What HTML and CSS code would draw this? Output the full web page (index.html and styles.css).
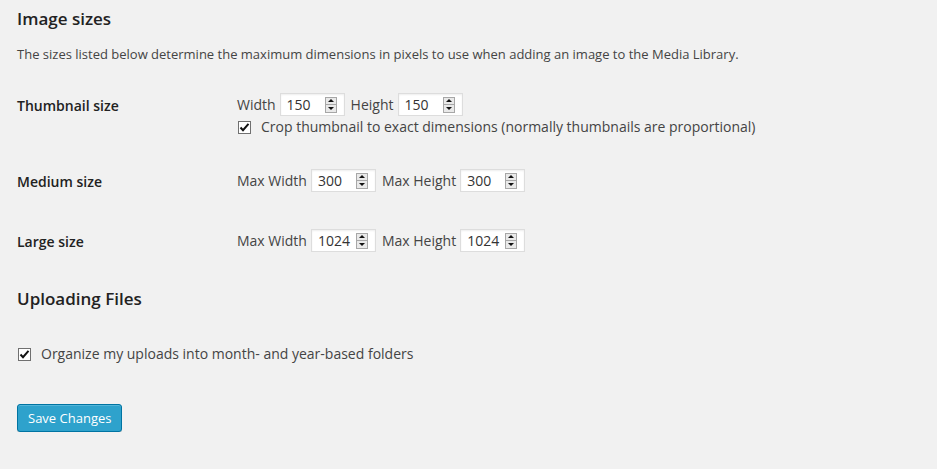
FILE: index.html
```html
<!DOCTYPE html>
<html>
<head>
<meta charset="utf-8">
<link rel="stylesheet" href="styles.css">
</head>
<body>
<div class="wrap">
  <h2 class="title">Image sizes</h2>
  <p class="desc">The sizes listed below determine the maximum dimensions in pixels to use when adding an image to the Media Library.</p>

  <div class="form-table">
    <div class="row row-thumb">
      <div class="th">Thumbnail size</div>
      <div class="td">
        <div class="line">
          <span class="lbl">Width</span>
          <span class="num"><span class="val">150</span><span class="spin"><span class="arr up"></span><span class="arr down"></span></span></span>
          <span class="lbl">Height</span>
          <span class="num"><span class="val">150</span><span class="spin"><span class="arr up"></span><span class="arr down"></span></span></span>
        </div>
        <div class="check-line">
          <span class="cb"><svg width="11" height="11" viewBox="0 0 11 11"><path d="M1.5 5.5 L4 8.2 L9.5 1.8" fill="none" stroke="#111" stroke-width="2"/></svg></span>
          <span class="cb-text">Crop thumbnail to exact dimensions (normally thumbnails are proportional)</span>
        </div>
      </div>
    </div>
    <div class="row">
      <div class="th">Medium size</div>
      <div class="td">
        <div class="line">
          <span class="lbl">Max Width</span>
          <span class="num"><span class="val">300</span><span class="spin"><span class="arr up"></span><span class="arr down"></span></span></span>
          <span class="lbl">Max Height</span>
          <span class="num"><span class="val">300</span><span class="spin"><span class="arr up"></span><span class="arr down"></span></span></span>
        </div>
      </div>
    </div>
    <div class="row">
      <div class="th">Large size</div>
      <div class="td">
        <div class="line">
          <span class="lbl">Max Width</span>
          <span class="num"><span class="val">1024</span><span class="spin"><span class="arr up"></span><span class="arr down"></span></span></span>
          <span class="lbl">Max Height</span>
          <span class="num"><span class="val">1024</span><span class="spin"><span class="arr up"></span><span class="arr down"></span></span></span>
        </div>
      </div>
    </div>
  </div>

  <h2 class="title title-upload">Uploading Files</h2>

  <div class="check-line upload-line">
    <span class="cb"><svg width="11" height="11" viewBox="0 0 11 11"><path d="M1.5 5.5 L4 8.2 L9.5 1.8" fill="none" stroke="#111" stroke-width="2"/></svg></span>
    <span class="cb-text">Organize my uploads into month- and year-based folders</span>
  </div>

  <div class="submit">
    <button class="button-primary">Save Changes</button>
  </div>
</div>
</body>
</html>
```

FILE: styles.css
```css
html, body {
  margin: 0;
  padding: 0;
  background: #f1f1f1;
}
body {
  font-family: "Open Sans", "Liberation Sans", sans-serif;
  font-size: 13px;
  color: #444;
  line-height: 1.4;
}
.wrap {
  padding: 0 17px;
}
.title {
  margin: 0;
  padding-top: 8px;
  font-size: 17px;
  font-weight: 600;
  color: #222;
  line-height: 22px;
  height: 22px;
}
.desc {
  margin: 0;
  padding-top: 15px;
  line-height: 18px;
}
.form-table {
  margin-top: 15px;
  font-size: 14px;
}
.row {
  display: flex;
  height: 60px;
}
.row-thumb {
  height: 76px;
}
.th {
  width: 220px;
  flex: none;
  padding-top: 19px;
  font-weight: 600;
  color: #222;
  line-height: 17px;
}
.td {
  padding-top: 15px;
}
.line {
  display: flex;
  align-items: center;
  height: 23px;
}
.lbl {
  margin-right: 4px;
}
.num {
  display: inline-flex;
  align-items: center;
  justify-content: space-between;
  box-sizing: border-box;
  width: 65px;
  height: 23px;
  border: 1px solid #ddd;
  background: #fff;
  box-shadow: inset 0 1px 2px rgba(0,0,0,.07);
  padding: 0 7px 0 6px;
  margin-right: 6px;
  color: #333;
}
.val {
  line-height: 18px;
}
.spin {
  display: flex;
  flex-direction: column;
  width: 12px;
  height: 16px;
  box-sizing: border-box;
  border: 1px solid #a7a7a7;
  background: #e9e9e9;
}
.arr {
  flex: 1;
  display: flex;
  align-items: center;
  justify-content: center;
}
.arr.up {
  border-bottom: 1px solid #a7a7a7;
}
.arr.up::before {
  content: "";
  border-left: 3px solid transparent;
  border-right: 3px solid transparent;
  border-bottom: 3px solid #111;
}
.arr.down::before {
  content: "";
  border-left: 3px solid transparent;
  border-right: 3px solid transparent;
  border-top: 3px solid #111;
}
.check-line {
  display: flex;
  align-items: center;
  height: 22px;
  padding-left: 1px;
  font-size: 14px;
}
.cb {
  width: 13px;
  height: 13px;
  box-sizing: border-box;
  border: 1px solid #707070;
  background: #fff;
  display: flex;
  align-items: center;
  justify-content: center;
  margin-right: 10px;
}
.title-upload {
  margin-top: 0;
  padding-top: 14px;
}
.upload-line {
  margin-top: 33px;
}
.submit {
  margin-top: 39px;
}
.button-primary {
  font-family: "Open Sans", "Liberation Sans", sans-serif;
  font-size: 13px;
  height: 28px;
  padding: 0 10px 1px;
  background: #2ea2cc;
  border: 1px solid #0074a2;
  border-radius: 3px;
  color: #fff;
  box-shadow: inset 0 1px 0 rgba(120,200,230,.5), 0 1px 0 rgba(0,0,0,.15);
  line-height: 26px;
}
```
